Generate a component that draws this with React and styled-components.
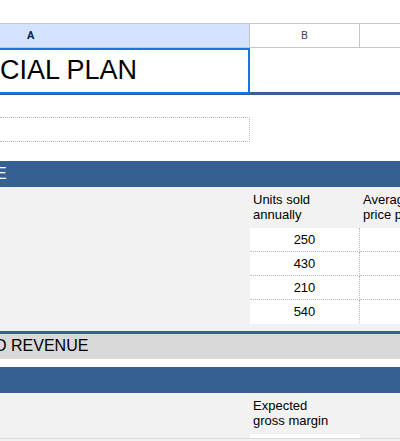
import styled, { createGlobalStyle } from "styled-components";

const DARK = "#366092";
const DOT = "#b9b9b9";

const GlobalStyle = createGlobalStyle`
  html, body { margin: 0; padding: 0; background: #fff; }
  body { font-family: "Liberation Sans", Arial, sans-serif; color: #000; }
`;

const Sheet = styled.div`
  width: 400px;
  height: 441px;
  overflow: hidden;
`;

const Blank = styled.div`
  height: ${(p) => p.h}px;
  background: ${(p) => p.bg || "#fff"};
`;

const ColHeaders = styled.div`
  display: grid;
  grid-template-columns: 250px 110px 1fr;
  height: 23px;
  border-top: 1px solid #c4c7c5;
  border-bottom: 1px solid #c4c7c5;
`;

const ColHead = styled.div`
  display: flex;
  align-items: center;
  justify-content: ${(p) => (p.selected ? "flex-start" : "center")};
  padding-left: ${(p) => (p.selected ? "27px" : "0")};
  background: ${(p) => (p.selected ? "#d3e3fd" : "#fff")};
  border-right: ${(p) => (p.last ? "none" : "1px solid #c4c7c5")};
  font-family: Roboto, "Liberation Sans", sans-serif;
  font-size: 11px;
  font-weight: ${(p) => (p.selected ? 700 : 400)};
  color: ${(p) => (p.selected ? "#041e49" : "#444746")};
`;

const Row = styled.div`
  display: grid;
  grid-template-columns: 250px 110px 1fr;
`;

const TitleRow = styled(Row)`
  height: 44px;
  border-bottom: 3px solid ${DARK};
`;

const TitleCell = styled.div`
  position: relative;
  font-size: 27px;
  line-height: 44px;
  white-space: nowrap;
  text-indent: -81px;

  &::after {
    content: "";
    position: absolute;
    left: -2px;
    top: 0;
    right: 0;
    bottom: -2px;
    border: 2px solid #1a73e8;
  }
`;

const NoteBox = styled.div`
  width: 249px;
  height: 23px;
  border-top: 1px dotted ${DOT};
  border-bottom: 1px dotted ${DOT};
  border-right: 1px dotted ${DOT};
`;

const Band = styled.div`
  height: ${(p) => p.h}px;
  line-height: ${(p) => p.lh}px;
  background: ${(p) => (p.light ? "#d9d9d9" : DARK)};
  color: ${(p) => (p.light ? "#000" : "#fff")};
  border-top: ${(p) => (p.light ? `3px solid ${DARK}` : "none")};
  font-size: 16px;
  white-space: nowrap;
  overflow: hidden;
  text-indent: ${(p) => p.indent}px;
`;

const Section = styled.div`
  background: #f2f2f2;
`;

const LabelRow = styled(Row)`
  height: 36px;
  padding-top: 5px;
`;

const Label = styled.div`
  font-size: 13px;
  line-height: 15px;
  padding-left: 3px;
  white-space: nowrap;
  overflow: hidden;
`;

const DataRow = styled(Row)`
  height: 24px;
`;

const DataCell = styled.div`
  background: #fff;
  font-size: 13px;
  line-height: 23px;
  text-align: center;
  border-bottom: ${(p) => (p.last ? "1px solid #fff" : `1px dotted ${DOT}`)};
  border-right: ${(p) => (p.edge ? `1px dotted ${DOT}` : "none")};
`;

const StubRow = styled(Row)`
  height: 4px;
  border-bottom: 1px solid #dadada;
`;

const WhiteStub = styled.div`
  background: #fff;
  grid-column: 2;
`;

const units = [250, 430, 210, 540];

export default function App() {
  return (
    <>
      <GlobalStyle />
      <Sheet>
        <Blank h={23} />
        <ColHeaders>
          <ColHead selected>A</ColHead>
          <ColHead>B</ColHead>
          <ColHead last />
        </ColHeaders>

        <TitleRow>
          <TitleCell>FINANCIAL PLAN</TitleCell>
          <div />
          <div />
        </TitleRow>

        <Blank h={22} />
        <NoteBox />
        <Blank h={19} />

        <Band h={26} lh={26} indent={-4}>
          E
        </Band>

        <Section>
          <LabelRow>
            <div />
            <Label>
              Units sold
              <br />
              annually
            </Label>
            <Label>
              Average
              <br />
              price per unit
            </Label>
          </LabelRow>
          {units.map((u, i) => {
            const last = i === units.length - 1;
            return (
              <DataRow key={u}>
                <div />
                <DataCell edge last={last}>
                  {u}
                </DataCell>
                <DataCell last={last} />
              </DataRow>
            );
          })}
          <Blank h={7} bg="#f2f2f2" />
        </Section>

        <Band light h={25} lh={24} indent={-5}>
          D REVENUE
        </Band>
        <Blank h={8} />
        <Band h={26} lh={26} indent={0} />

        <Section>
          <LabelRow>
            <div />
            <Label>
              Expected
              <br />
              gross margin
            </Label>
            <div />
          </LabelRow>
          <StubRow>
            <WhiteStub />
          </StubRow>
          <Blank h={20} bg="#f2f2f2" />
        </Section>
      </Sheet>
    </>
  );
}
